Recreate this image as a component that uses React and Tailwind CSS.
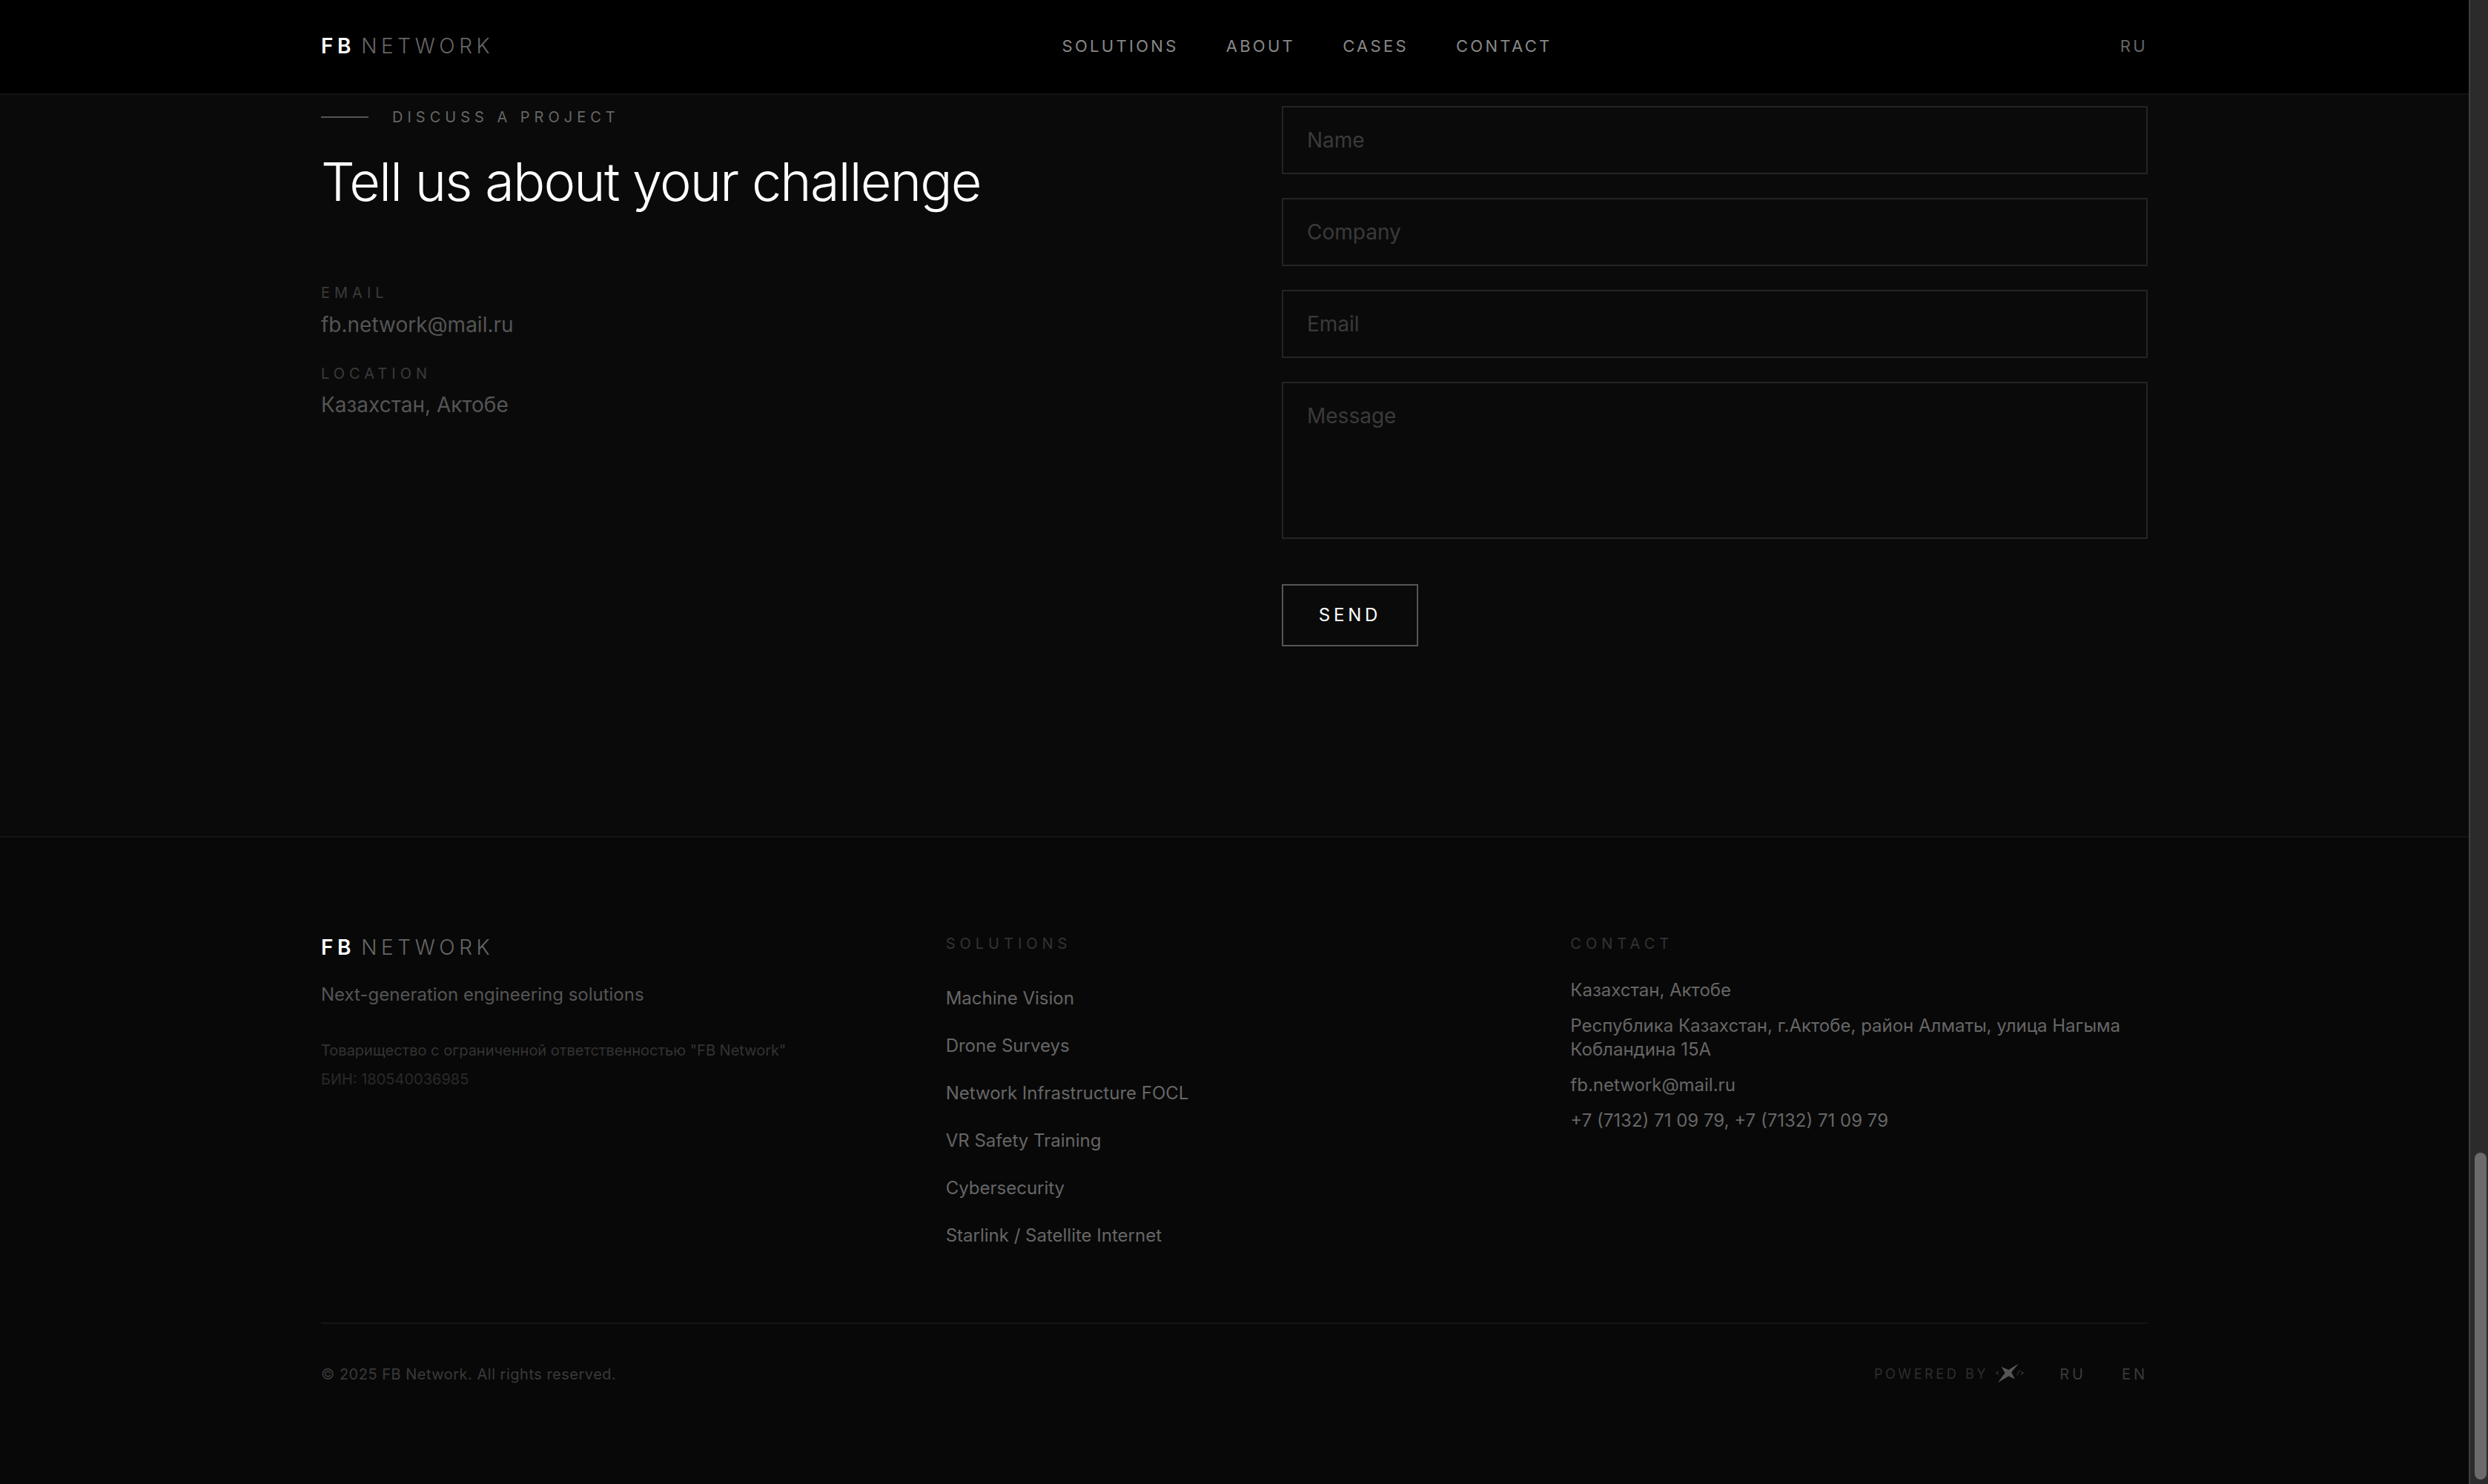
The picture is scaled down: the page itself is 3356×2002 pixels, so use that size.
import React from 'react';

const navLinks = ['Solutions', 'About', 'Cases', 'Contact'];

const solutions = [
  'Machine Vision',
  'Drone Surveys',
  'Network Infrastructure FOCL',
  'VR Safety Training',
  'Cybersecurity',
  'Starlink / Satellite Internet',
];

const contacts = [
  'Казахстан, Актобе',
  'Республика Казахстан, г.Актобе, район Алматы, улица Нагыма Кобландина 15А',
  'fb.network@mail.ru',
  '+7 (7132) 71 09 79, +7 (7132) 71 09 79',
];

const fieldClass =
  'block w-full border-2 border-[#242424] bg-transparent px-8 text-[28px] leading-[40px] text-white placeholder-[#3a3a3a] outline-none';

function Logo() {
  return (
    <div className="text-[28px] leading-[40px] tracking-[0.2em] text-white">
      <span className="font-semibold">FB</span>
      <span className="ml-2 font-light text-[#666666]">NETWORK</span>
    </div>
  );
}

function StudioMark() {
  return (
    <svg viewBox="0 0 40 30" className="h-[30px] w-[40px] overflow-visible" fill="none">
      <path d="M33 0.5 L23.2 12.3 L27.9 21.5 L19.3 17.5 L4.8 26.2 L14.5 13.3 L9.5 4.8 L19.3 8.9 Z" fill="#555555" />
      <path d="M6 11 L2.2 13.2 L6 15.3 M34.7 9.2 L30.5 16.3 M35.8 11.2 L39.6 13.3 L35.8 15.4" stroke="#484848" strokeWidth="0.9" />
    </svg>
  );
}

function Header() {
  return (
    <header className="h-32 border-b-2 border-[#141414] bg-black pb-0.5">
      <div className="mx-auto flex h-full w-[2464px] items-center justify-between">
        <Logo />
        <nav className="flex gap-16">
          {navLinks.map(link => (
            <a key={link} className="text-[22px] leading-[33px] tracking-[0.15em] text-[#888888] uppercase">{link}</a>
          ))}
        </nav>
        <span className="text-[22px] leading-[33px] tracking-[0.15em] text-[#666666]">RU</span>
      </div>
    </header>
  );
}

function ContactInfo({ label, value }) {
  return (
    <div>
      <p className="mb-[7.5px] text-[20px] leading-[30px] tracking-[0.3em] text-[#3a3a3a] uppercase">{label}</p>
      <p className="text-[28px] leading-[40px] text-[#555555]">{value}</p>
    </div>
  );
}

function ContactSection() {
  return (
    <main className="h-[1000px] bg-[#0a0a0a] pt-[15px]">
      <div className="mx-auto grid w-[2464px] grid-cols-2 gap-32">
        <div>
          <div className="flex items-center gap-8">
            <span className="h-0.5 w-16 bg-[#555555]" />
            <span className="text-[20px] leading-[30px] tracking-[0.3em] text-[#666666] uppercase">Discuss a project</span>
          </div>
          <h2 className="mt-8 text-[72px] leading-[80px] font-light tracking-[-0.025em] text-white">
            Tell us about your challenge
          </h2>
          <div className="mt-[95px] space-y-[31px]">
            <ContactInfo label="Email" value="fb.network@mail.ru" />
            <ContactInfo label="Location" value="Казахстан, Актобе" />
          </div>
        </div>
        <form className="space-y-8">
          <input className={`${fieldClass} h-[92px]`} placeholder="Name" />
          <input className={`${fieldClass} h-[92px]`} placeholder="Company" />
          <input className={`${fieldClass} h-[92px]`} placeholder="Email" />
          <textarea className={`${fieldClass} h-[212px] resize-none py-6`} placeholder="Message" />
          <button type="button" className="mt-[29px] h-[84px] w-[184px] border-2 border-[#555555] text-[24px] tracking-[0.2em] text-white">
            SEND
          </button>
        </form>
      </div>
    </main>
  );
}

function Footer() {
  return (
    <footer className="flex-1 border-t-2 border-[#151515] bg-[#080808] pt-32">
      <div className="mx-auto w-[2464px]">
        <div className="grid grid-cols-3 gap-16 pb-24">
          <div>
            <Logo />
            <p className="mt-6 text-[24px] leading-[39px] text-[#555555]">Next-generation engineering solutions</p>
            <p className="mt-[41px] text-[20px] leading-[30px] text-[#333333]">
              Товарищество с ограниченной ответственностью "FB Network"
            </p>
            <p className="mt-[9px] text-[20px] leading-[30px] text-[#2a2a2a]">БИН: 180540036985</p>
          </div>
          <div>
            <h4 className="mb-8 text-[20px] leading-[30px] tracking-[0.3em] text-[#333333]">SOLUTIONS</h4>
            <ul className="space-y-4">
              {solutions.map(item => (
                <li key={item} className="text-[32px] leading-[1.5]">
                  <a className="text-[24px] text-[#666666]">{item}</a>
                </li>
              ))}
            </ul>
          </div>
          <div>
            <h4 className="mb-8 text-[20px] leading-[30px] tracking-[0.3em] text-[#333333]">CONTACT</h4>
            <div className="space-y-4 text-[24px] leading-[32px] text-[#666666]">
              {contacts.map(line => (
                <p key={line}>{line}</p>
              ))}
            </div>
          </div>
        </div>
        <div className="flex items-center justify-between border-t-2 border-[#151515] pt-12 text-[20px] leading-[40px] text-[#3a3a3a]">
          <span className="tracking-[0.025em]">© 2025 FB Network. All rights reserved.</span>
          <div className="flex items-center gap-12 tracking-[0.2em]">
            <span className="flex items-center gap-2">
              <span className="text-[18px] tracking-[0.2em] text-[#2e2e2e]">POWERED BY</span>
              <StudioMark />
            </span>
            <a>RU</a>
            <a>EN</a>
          </div>
        </div>
      </div>
    </footer>
  );
}

function Scrollbar() {
  return (
    <aside className="flex h-full w-[26px] flex-col justify-end border-l-2 border-[#3e3e3e] bg-[#2b2b2b] pr-0.5 pb-1.5 pl-1.5">
      <div className="h-[441px] rounded-full bg-[#6b6b6b]" />
    </aside>
  );
}

export default function App() {
  return (
    <div className="flex h-[2002px] w-[3356px] overflow-hidden bg-black font-['Inter',sans-serif] antialiased">
      <div className="flex flex-1 flex-col">
        <Header />
        <ContactSection />
        <Footer />
      </div>
      <Scrollbar />
    </div>
  );
}
